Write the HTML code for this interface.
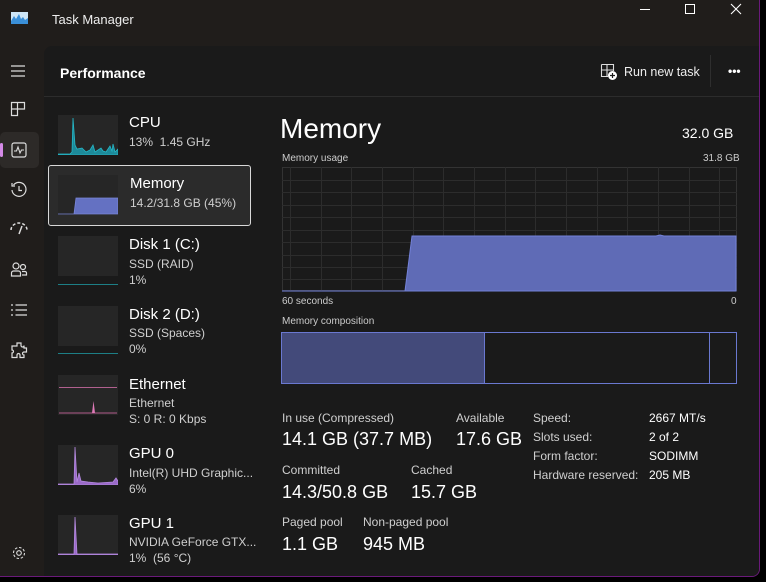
<!DOCTYPE html>
<html><head><meta charset="utf-8"><style>
*{margin:0;padding:0;box-sizing:border-box}
body{width:766px;height:582px;background:#000;font-family:"Segoe UI","Liberation Sans",sans-serif;color:#fff;position:relative;overflow:hidden}
.win{position:absolute;left:0;top:0;width:760px;height:577px;background:#201d1b;border-right:1px solid #6a1a7a;border-bottom:1px solid #6a1a7a;border-bottom-right-radius:8px;overflow:hidden}
.panel{position:absolute;left:44px;top:46px;width:716px;height:531px;background:#1a1a1a;border-top-left-radius:8px}
.a{position:absolute;white-space:nowrap}
.thumb{position:absolute;left:58px;width:60px;height:40px;background:#262626}
.t1{font-size:15px;color:#fff}
.t2{font-size:12px;color:#cfcfcf}
.lbl{font-size:12px;color:#cfcfcf}
.big{font-size:18px;color:#fff}
svg{position:absolute}
</style></head><body>
<div class="win">
 <svg style="left:11px;top:12px" width="17" height="12" viewBox="0 0 17 12"><rect width="17" height="12" fill="#cde6f7"/><path d="M0 9 L3 4 L5 7 L8 2 L10 7 L12 5 L14 8 L17 6 L17 12 L0 12Z" fill="#3a8fd8"/></svg>
 <div class="a" style="left:52px;top:12px;font-size:13px;color:#eee">Task Manager</div>
 <div class="a" style="left:640px;top:9px;width:10px;height:1px;background:#fff"></div>
 <div class="a" style="left:685px;top:4px;width:10px;height:10px;border:1px solid #fff"></div>
 <svg style="left:730px;top:3px" width="12" height="12" viewBox="0 0 12 12"><path d="M1 1L11 11M11 1L1 11" stroke="#fff" stroke-width="1.1"/></svg>

 <svg style="left:10px;top:64px" width="16" height="14"><path d="M1 2H15M1 7H15M1 12H15" stroke="#ddd" stroke-width="1.2"/></svg>
 <svg style="left:10px;top:101px" width="16" height="16"><path d="M1.5 1.5H7.5V14.5H1.5ZM1.5 8H14.5V1.5H7.5M7.5 8V14.5" fill="none" stroke="#ddd" stroke-width="1.2"/></svg>
 <div class="a" style="left:0;top:132px;width:39px;height:36px;background:#2d2a28;border-radius:5px"></div>
 <div class="a" style="left:0;top:143px;width:3px;height:14px;background:#d58ae8;border-radius:2px"></div>
 <svg style="left:11px;top:142px" width="16" height="16"><rect x="1" y="1" width="14" height="14" rx="2" fill="none" stroke="#ddd" stroke-width="1.2"/><path d="M3 9H5.5L7 5L9 11L10.5 8H13" fill="none" stroke="#ddd" stroke-width="1.1"/></svg>
 <svg style="left:10px;top:181px" width="18" height="18"><path d="M3.5 4A7 7 0 1 1 2 9" fill="none" stroke="#ddd" stroke-width="1.2"/><path d="M2 2V5H5" fill="none" stroke="#ddd" stroke-width="1.2"/><path d="M9 5V9.5H12" fill="none" stroke="#ddd" stroke-width="1.2"/></svg>
 <svg style="left:10px;top:222px" width="18" height="14"><path d="M1 8A8 7 0 0 1 17 8" fill="none" stroke="#ddd" stroke-width="1.5" stroke-dasharray="3 2"/><path d="M9 12L12 4" stroke="#ddd" stroke-width="1.5"/></svg>
 <svg style="left:10px;top:261px" width="18" height="18"><circle cx="6" cy="5" r="3" fill="none" stroke="#ddd" stroke-width="1.2"/><circle cx="13" cy="6" r="2.5" fill="none" stroke="#ddd" stroke-width="1.2"/><path d="M1.5 15V12A2 2 0 0 1 3.5 10H8.5A2 2 0 0 1 10.5 12V15ZM12 10.5H15A1.5 1.5 0 0 1 16.5 12V14H12" fill="none" stroke="#ddd" stroke-width="1.2"/></svg>
 <svg style="left:10px;top:303px" width="18" height="14"><path d="M1 2H3M1 7H3M1 12H3M5.5 2H17M5.5 7H17M5.5 12H17" stroke="#ddd" stroke-width="1.3"/></svg>
 <svg style="left:10px;top:341px" width="18" height="18"><path d="M7 2H11V4.5A1.5 1.5 0 0 0 14 4.5V7H16.5V11H14A1.5 1.5 0 0 0 14 14V16.5H10V14A1.5 1.5 0 0 0 7 14V16.5H2V12A1.5 1.5 0 0 0 2 9V5H7Z" fill="none" stroke="#ddd" stroke-width="1.2"/></svg>
 <svg style="left:11px;top:545px" width="16" height="16"><circle cx="8" cy="8" r="2.3" fill="none" stroke="#ddd" stroke-width="1.1"/><circle cx="8" cy="8" r="5.5" fill="none" stroke="#ddd" stroke-width="1.1" stroke-dasharray="2.5 1.8"/></svg>

 <div class="panel"></div>
 <div class="a" style="left:60px;top:65px;font-size:14px;font-weight:bold;color:#fff">Performance</div>
 <svg style="left:600px;top:63px" width="18" height="18"><path d="M1.5 1.5H13.5V8M1.5 1.5V13.5H8M1.5 7H13.5M7 1.5V13.5" fill="none" stroke="#ddd" stroke-width="1.1"/><circle cx="12.5" cy="12.5" r="4.5" fill="#fff"/><path d="M12.5 10V15M10 12.5H15" stroke="#1a1a1a" stroke-width="1.2"/></svg>
 <div class="a" style="left:624px;top:65px;font-size:12.5px;color:#eee">Run new task</div>
 <div class="a" style="left:710px;top:55px;width:1px;height:32px;background:#2e2e2e"></div>
 <div class="a" style="left:728px;top:64px;font-size:12px;color:#fff;letter-spacing:0px;font-weight:bold">•••</div>
 <div class="a" style="left:44px;top:96px;width:716px;height:1px;background:#2c2c2c"></div>

 <div class="thumb" style="top:115px"></div>
 <svg style="left:58px;top:115px" width="60" height="40"><path d="M0 39 L12 39 L14 37 L15 3 L17 30 L19 34 L24 33 L28 37 L32 35 L35 30 L37 37 L43 33 L45 36 L48 37 L52 31 L54 36 L55 29 L57 37 L60 34 L60 40 L0 40Z" fill="#1d8a9a" stroke="#25b8c8" stroke-width="0.8"/></svg>
 <div class="a t1" style="left:129px;top:114px">CPU</div>
 <div class="a t2" style="left:129px;top:135px">13%&nbsp; 1.45 GHz</div>

 <div class="a" style="left:48px;top:165px;width:203px;height:61px;background:#2b2b2b;border:1px solid #d8d8d8;border-radius:3px"></div>
 <div class="thumb" style="top:175px;background:#262626"></div>
 <svg style="left:58px;top:175px" width="60" height="40"><path d="M0 39 L16 39 L18 23 L60 23 L60 39Z" fill="#6471c2" stroke="#7a86d8" stroke-width="0.8"/></svg>
 <div class="a t1" style="left:130px;top:175px">Memory</div>
 <div class="a t2" style="left:130px;top:196px">14.2/31.8 GB (45%)</div>

 <div class="thumb" style="top:236px"></div>
 <div class="a" style="left:58px;top:284px;width:60px;height:1px;background:#1d7f86"></div>
 <div class="a t1" style="left:129px;top:236px">Disk 1 (C:)</div>
 <div class="a t2" style="left:129px;top:257px">SSD (RAID)</div>
 <div class="a t2" style="left:129px;top:273px">1%</div>

 <div class="thumb" style="top:306px"></div>
 <div class="a" style="left:58px;top:353px;width:60px;height:1px;background:#1d7f86"></div>
 <div class="a t1" style="left:129px;top:306px">Disk 2 (D:)</div>
 <div class="a t2" style="left:129px;top:326px">SSD (Spaces)</div>
 <div class="a t2" style="left:129px;top:342px">0%</div>

 <div class="thumb" style="top:375px"></div>
 <div class="a" style="left:59px;top:387px;width:58px;height:1px;background:#b0608e"></div>
 <svg style="left:58px;top:375px" width="60" height="40"><path d="M1 38H59" stroke="#b05a8a"/><path d="M34 38 L35.5 26 L37 38Z" fill="#e07ab8"/></svg>
 <div class="a t1" style="left:129px;top:376px">Ethernet</div>
 <div class="a t2" style="left:129px;top:396px">Ethernet</div>
 <div class="a t2" style="left:129px;top:412px">S: 0 R: 0 Kbps</div>

 <div class="thumb" style="top:445px"></div>
 <svg style="left:58px;top:445px" width="60" height="40"><path d="M0 39 L16 39 L17 2 L19 37 L21 28 L23 36 L30 37 L40 38 L55 37 L58 33 L60 36 L60 40 L0 40Z" fill="#9a6ac8" stroke="#b58ae0" stroke-width="0.8"/></svg>
 <div class="a t1" style="left:129px;top:445px">GPU 0</div>
 <div class="a t2" style="left:129px;top:466px">Intel(R) UHD Graphic...</div>
 <div class="a t2" style="left:129px;top:482px">6%</div>

 <div class="thumb" style="top:515px"></div>
 <svg style="left:58px;top:515px" width="60" height="40"><path d="M0 39 L16 39 L17 2 L19 39 L60 39 L60 40 L0 40Z" fill="#9a6ac8" stroke="#b58ae0" stroke-width="0.8"/></svg>
 <div class="a t1" style="left:129px;top:515px">GPU 1</div>
 <div class="a t2" style="left:129px;top:535px">NVIDIA GeForce GTX...</div>
 <div class="a t2" style="left:129px;top:551px">1%&nbsp; (56 °C)</div>

 <div class="a" style="left:280px;top:113px;font-size:28px;color:#fff">Memory</div>
 <div class="a" style="left:682px;top:125px;font-size:14px;color:#fff">32.0 GB</div>
 <div class="a" style="left:282px;top:153px;font-size:10px;color:#ccc">Memory usage</div>
 <div class="a" style="left:703px;top:153px;font-size:10px;color:#ccc">31.8 GB</div>
 <svg style="left:282px;top:167px" width="455" height="125">
  <rect x="0.5" y="0.5" width="454" height="123" fill="#1a1a1a" stroke="#333"/>
  <g stroke="#2c2c2c" stroke-width="1">
   <path d="M8.5 0V124M39.5 0V124M69.5 0V124M100.5 0V124M131.5 0V124M161.5 0V124M192.5 0V124M223.5 0V124M253.5 0V124M284.5 0V124M315.5 0V124M345.5 0V124M376.5 0V124M407.5 0V124M437.5 0V124"/>
   <path d="M0 13.5H455M0 25.5H455M0 38.5H455M0 50.5H455M0 63.5H455M0 75.5H455M0 88.5H455M0 100.5H455M0 112.5H455"/>
  </g>
  <path d="M0 124 L123 124 L130 69 L374 69 L378 68 L382 69 L454 69 L454 124Z" fill="#5f6bb6" stroke="#7381d8" stroke-width="1"/>
 </svg>
 <div class="a" style="left:282px;top:296px;font-size:10px;color:#ccc">60 seconds</div>
 <div class="a" style="left:731px;top:296px;font-size:10px;color:#ccc">0</div>
 <div class="a" style="left:282px;top:316px;font-size:10px;color:#ccc">Memory composition</div>
 <div class="a" style="left:281px;top:332px;width:456px;height:52px;border:1px solid #6a78d0;background:#1a1a1a"></div>
 <div class="a" style="left:282px;top:333px;width:203px;height:50px;background:#434a7a;border-right:1px solid #6a78d0"></div>
 <div class="a" style="left:709px;top:333px;width:1px;height:50px;background:#6a78d0"></div>

 <div class="a lbl" style="left:282px;top:411px">In use (Compressed)</div>
 <div class="a big" style="left:282px;top:429px">14.1 GB (37.7 MB)</div>
 <div class="a lbl" style="left:456px;top:411px">Available</div>
 <div class="a big" style="left:456px;top:429px">17.6 GB</div>
 <div class="a lbl" style="left:282px;top:463px">Committed</div>
 <div class="a big" style="left:282px;top:482px">14.3/50.8 GB</div>
 <div class="a lbl" style="left:411px;top:463px">Cached</div>
 <div class="a big" style="left:411px;top:482px">15.7 GB</div>
 <div class="a lbl" style="left:282px;top:515px">Paged pool</div>
 <div class="a big" style="left:282px;top:534px">1.1 GB</div>
 <div class="a lbl" style="left:363px;top:515px">Non-paged pool</div>
 <div class="a big" style="left:363px;top:534px">945 MB</div>

 <div class="a lbl" style="left:533px;top:411px">Speed:</div>
 <div class="a lbl" style="left:649px;top:411px;color:#fff">2667 MT/s</div>
 <div class="a lbl" style="left:533px;top:430px">Slots used:</div>
 <div class="a lbl" style="left:649px;top:430px;color:#fff">2 of 2</div>
 <div class="a lbl" style="left:533px;top:449px">Form factor:</div>
 <div class="a lbl" style="left:649px;top:449px;color:#fff">SODIMM</div>
 <div class="a lbl" style="left:533px;top:468px">Hardware reserved:</div>
 <div class="a lbl" style="left:649px;top:468px;color:#fff">205 MB</div>
</div>
</body></html>
